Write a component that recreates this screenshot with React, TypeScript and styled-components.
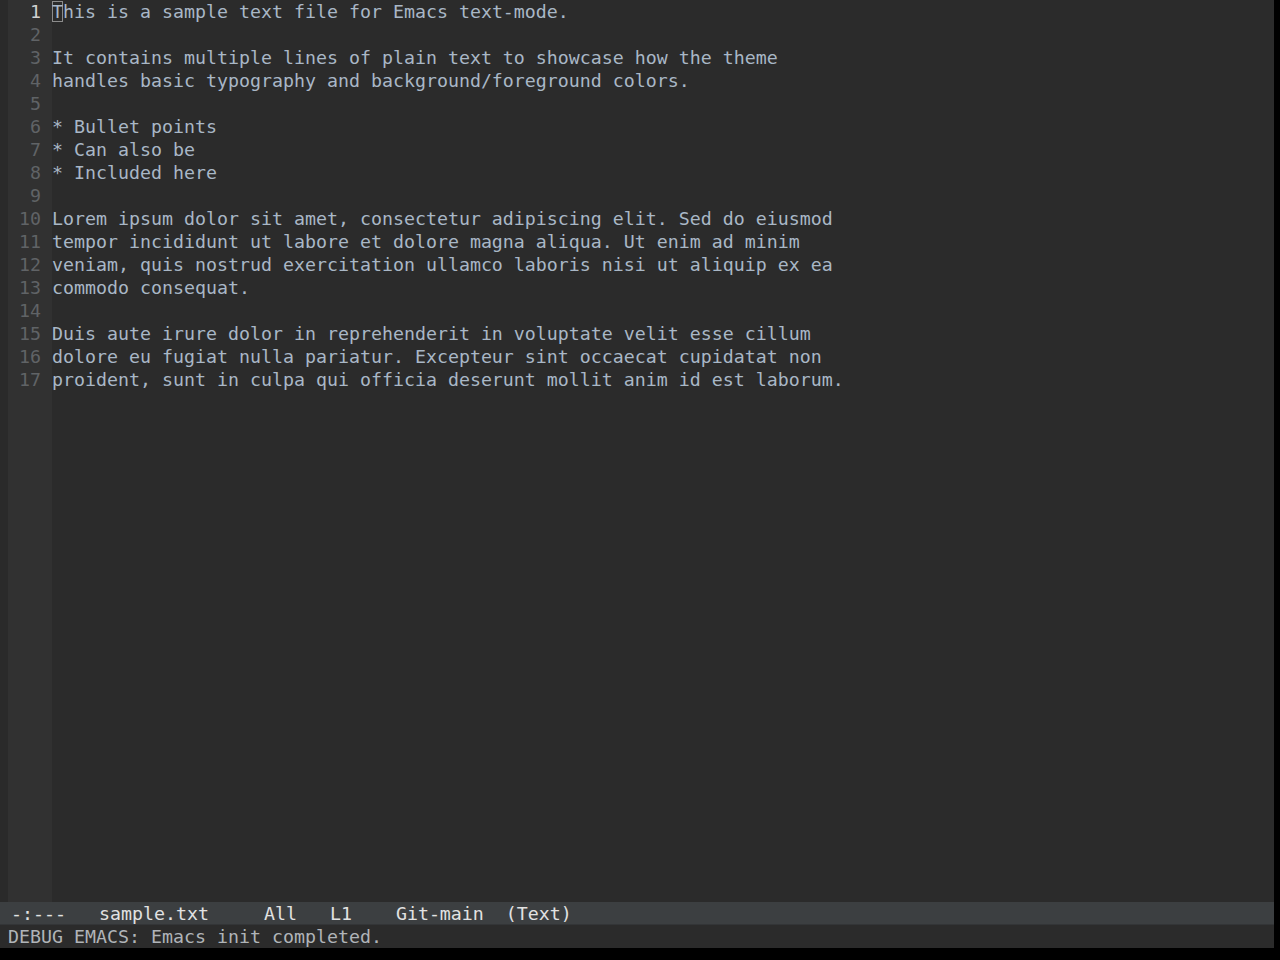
import React from 'react';
import styled, { createGlobalStyle } from 'styled-components';

const GlobalStyle = createGlobalStyle`
  html, body {
    margin: 0;
    padding: 0;
    background: #000;
  }
`;

const Frame = styled.div`
  width: 1274px;
  height: 948px;
  display: grid;
  grid-template-rows: 1fr 23px 23px;
  background: #2b2b2b;
  font-family: "DejaVu Sans Mono", monospace;
  font-size: 18.27px;
  line-height: 23px;
  overflow: hidden;
`;

const Window = styled.div`
  display: flex;
  min-height: 0;
`;

const Fringe = styled.div`
  width: 8px;
  background: #2a2a2a;
`;

const Gutter = styled.div`
  width: 44px;
  background: #313131;
  display: flex;
  flex-direction: column;
`;

const LineNumber = styled.div<{ $current?: boolean }>`
  height: 23px;
  text-align: right;
  padding-right: 11px;
  color: ${p => (p.$current ? '#d0d0d0' : '#606366')};
`;

const Buffer = styled.div`
  flex: 1;
  display: flex;
  flex-direction: column;
  color: #a9b7c6;
`;

const Line = styled.div`
  height: 23px;
  white-space: pre;
`;

const Cursor = styled.span`
  display: inline-block;
  width: 11px;
  height: 21px;
  vertical-align: top;
  margin-top: 1px;
  line-height: 21px;
  box-shadow: inset 0 0 0 1px #8c8c8c;
`;

const ModeLine = styled.div`
  background: #3c3f41;
  border-bottom: 1px solid #333537;
  color: #e2e2e2;
  white-space: pre;
  line-height: 24px;
`;

const EchoArea = styled.div`
  background: #2b2b2b;
  color: #b0b4b8;
  padding-left: 8px;
  white-space: pre;
`;

const lines = [
  'This is a sample text file for Emacs text-mode.',
  '',
  'It contains multiple lines of plain text to showcase how the theme',
  'handles basic typography and background/foreground colors.',
  '',
  '* Bullet points',
  '* Can also be',
  '* Included here',
  '',
  'Lorem ipsum dolor sit amet, consectetur adipiscing elit. Sed do eiusmod',
  'tempor incididunt ut labore et dolore magna aliqua. Ut enim ad minim',
  'veniam, quis nostrud exercitation ullamco laboris nisi ut aliquip ex ea',
  'commodo consequat.',
  '',
  'Duis aute irure dolor in reprehenderit in voluptate velit esse cillum',
  'dolore eu fugiat nulla pariatur. Excepteur sint occaecat cupidatat non',
  'proident, sunt in culpa qui officia deserunt mollit anim id est laborum.',
];

export default function App() {
  return (
    <>
      <GlobalStyle />
      <Frame>
        <Window>
          <Fringe />
          <Gutter>
            {lines.map((_, i) => (
              <LineNumber key={i} $current={i === 0}>
                {i + 1}
              </LineNumber>
            ))}
          </Gutter>
          <Buffer>
            {lines.map((text, i) =>
              i === 0 ? (
                <Line key={i}>
                  <Cursor>{text[0]}</Cursor>
                  {text.slice(1)}
                </Line>
              ) : (
                <Line key={i}>{text}</Line>
              )
            )}
          </Buffer>
        </Window>
        <ModeLine>{' -:---   sample.txt     All   L1    Git-main  (Text)'}</ModeLine>
        <EchoArea>DEBUG EMACS: Emacs init completed.</EchoArea>
      </Frame>
    </>
  );
}
